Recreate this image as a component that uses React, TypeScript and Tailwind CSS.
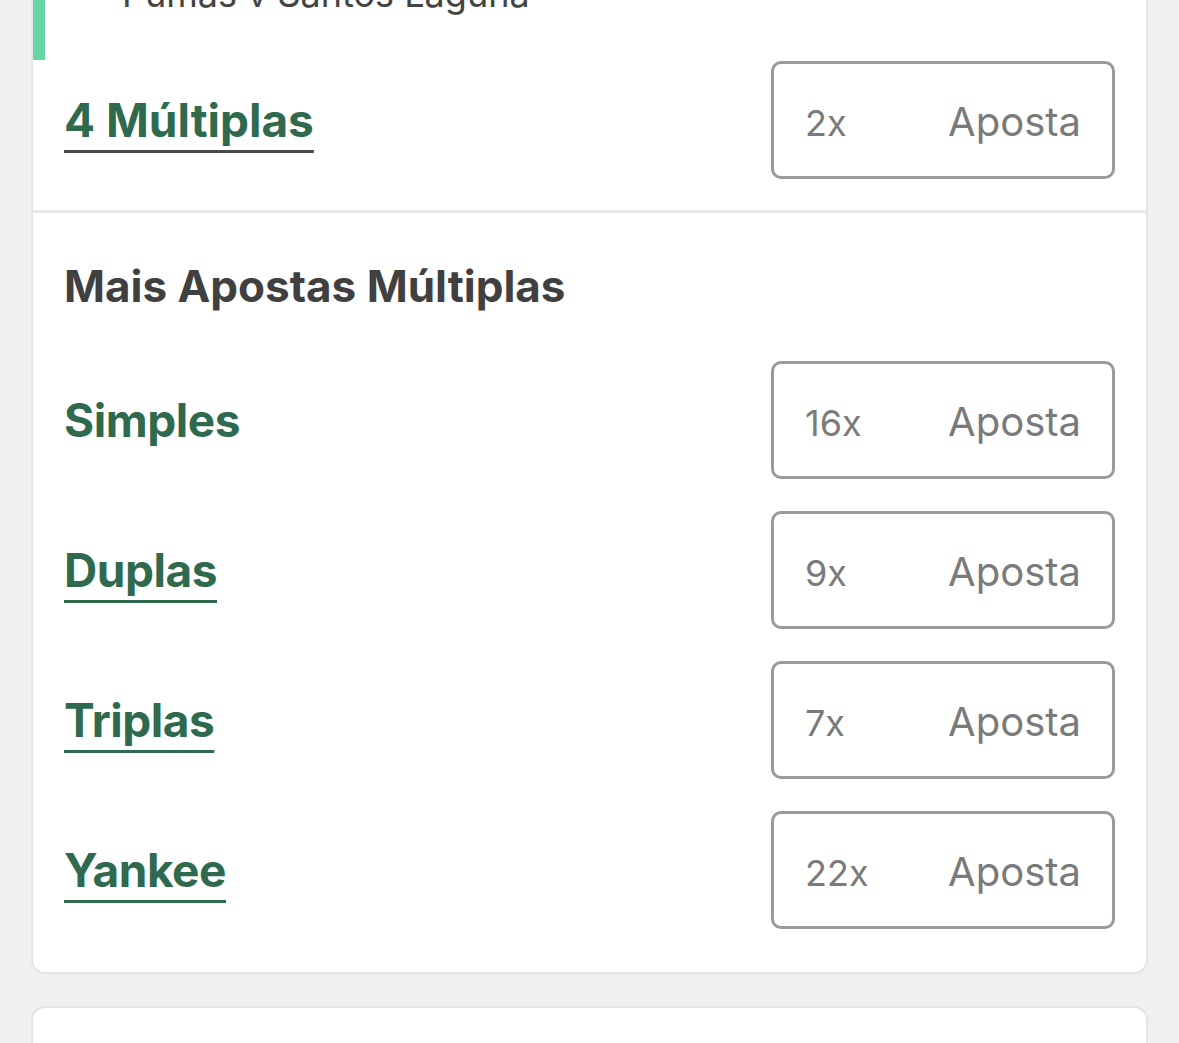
const rows = [
  { label: "Simples", count: "16x", underline: false },
  { label: "Duplas", count: "9x", underline: true },
  { label: "Triplas", count: "7x", underline: true },
  { label: "Yankee", count: "22x", underline: true },
];

function StakeBox({ count }: { count: string }) {
  return (
    <div className="flex h-[118px] w-[344px] shrink-0 items-center rounded-[10px] border-[3px] border-[#9a9a9a] bg-white pl-[31px] pr-[31px] pt-[3px]">
      <div className="flex w-full items-baseline justify-between leading-none text-[#7a7a7a]">
        <span className="text-[36px]">{count}</span>
        <span className="text-[40px]">Aposta</span>
      </div>
    </div>
  );
}

export default function App() {
  return (
    <div className="min-h-screen bg-[#f0f0f0] px-[31px] font-['Inter',sans-serif]">
      <div className="rounded-b-[14px] border-x-2 border-b-2 border-[#e4e4e4] bg-white">
        {/* selected leg, mostly scrolled away */}
        <div className="flex h-[60px] overflow-hidden">
          <div className="w-[12px] shrink-0 bg-[#66d6a6]" />
          <div className="-mt-[24px] pl-[77px] text-[36px] leading-none whitespace-nowrap text-[#444]">
            Pumas v Santos Laguna
          </div>
        </div>

        <div className="flex items-center justify-between border-b-[3px] border-[#e8e8e8] px-[31px] pt-px pb-[31px]">
          <span className="text-[46px] font-bold leading-none text-[#2f6a4f] underline decoration-[#4a4a4a] decoration-[3px] underline-offset-[13px]">
            4 Múltiplas
          </span>
          <StakeBox count="2x" />
        </div>

        <div className="px-[31px] pt-[51px] pb-[43px]">
          <h2 className="text-[44px] font-bold leading-none text-[#404040]">
            Mais Apostas Múltiplas
          </h2>
          <div className="mt-[53px] flex flex-col gap-[32px]">
            {rows.map((r) => (
              <div key={r.label} className="flex items-center justify-between">
                <span
                  className={
                    r.underline
                      ? "text-[46px] font-bold leading-none tracking-[-0.01em] text-[#2f6a4f] underline decoration-[#2f6a4f] decoration-[3px] underline-offset-[13px]"
                      : "text-[46px] font-bold leading-none tracking-[-0.01em] text-[#2f6a4f]"
                  }
                >
                  {r.label}
                </span>
                <StakeBox count={r.count} />
              </div>
            ))}
          </div>
        </div>
      </div>

      <div className="mt-[32px] h-[80px] rounded-t-[14px] border-x-2 border-t-2 border-[#e4e4e4] bg-white" />
    </div>
  );
}
